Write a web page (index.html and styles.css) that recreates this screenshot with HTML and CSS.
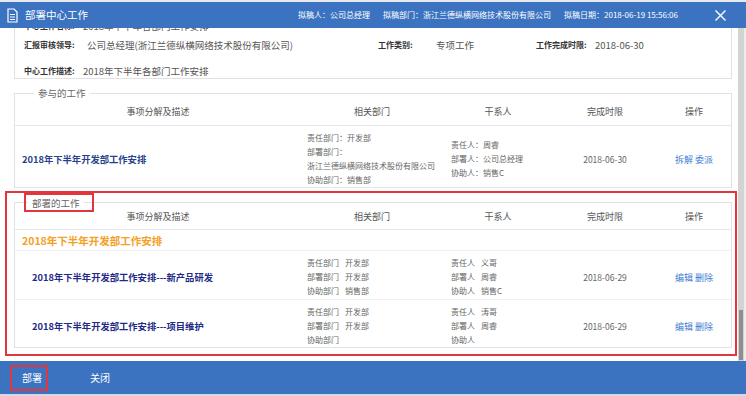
FILE: index.html
```html
<!DOCTYPE html>
<html lang="zh-CN">
<head>
    <meta charset="UTF-8">
    <meta name="viewport" content="width=device-width, initial-scale=1.0">
    <title>部署中心工作</title>
    <link rel="stylesheet" href="styles.css">
</head>
<body>
    <div class="dialog">
        <div class="titlebar">
            <svg class="title-icon" width="11" height="15" viewBox="0 0 11 15">
                <path d="M1 1h6l3 3v10H1z" fill="none" stroke="#fff" stroke-width="1.2"/>
                <path d="M3 6.5h5M3 9h5M3 11.5h5" stroke="#fff" stroke-width="1"/>
            </svg>
            <span class="title">部署中心工作</span>
            <div class="meta">
                <span>拟稿人：公司总经理</span>
                <span>拟稿部门：浙江兰德纵横网络技术股份有限公司</span>
                <span>拟稿日期：2018-06-19 15:56:06</span>
            </div>
            <svg class="close" width="11" height="11" viewBox="0 0 11 11">
                <path d="M0.5 0.5l10 10M10.5 0.5l-10 10" stroke="#fff" stroke-width="1.4"/>
            </svg>
        </div>

        <div class="body">
            <div class="scroll">
                <div class="info-card">
                    <div class="info-row r0">
                        <span class="label w59">中心工作名称:</span>
                        <span class="value">2018年下半年各部门工作安排</span>
                    </div>
                    <div class="info-row r1">
                        <span class="label w63">汇报审核领导:</span>
                        <span class="value w291">公司总经理(浙江兰德纵横网络技术股份有限公司)</span>
                        <span class="label w58">工作类别:</span>
                        <span class="value w100">专项工作</span>
                        <span class="label w59">工作完成时限:</span>
                        <span class="value">2018-06-30</span>
                    </div>
                    <div class="info-row">
                        <span class="label w59">中心工作描述:</span>
                        <span class="value">2018年下半年各部门工作安排</span>
                    </div>
                </div>

                <fieldset class="box joined">
                    <legend>参与的工作</legend>
                    <table class="grid">
                        <colgroup>
                            <col class="c1"><col class="c2"><col class="c3"><col class="c4"><col class="c5">
                        </colgroup>
                        <thead>
                            <tr><th>事项分解及描述</th><th>相关部门</th><th>干系人</th><th>完成时限</th><th>操作</th></tr>
                        </thead>
                        <tbody>
                            <tr>
                                <td class="item">2018年下半年开发部工作安排</td>
                                <td class="dept">
                                    <div>责任部门：开发部</div>
                                    <div>部署部门：</div>
                                    <div>浙江兰德纵横网络技术股份有限公司</div>
                                    <div>协助部门：销售部</div>
                                </td>
                                <td class="people">
                                    <div>责任人：周睿</div>
                                    <div>部署人：公司总经理</div>
                                    <div>协助人：销售C</div>
                                </td>
                                <td class="date">2018-06-30</td>
                                <td class="ops"><a>拆解</a> <a>委派</a></td>
                            </tr>
                        </tbody>
                    </table>
                </fieldset>

                <div class="highlight">
                    <fieldset class="box deploy">
                        <legend class="marked">部署的工作</legend>
                        <table class="grid">
                            <colgroup>
                                <col class="c1"><col class="c2"><col class="c3"><col class="c4"><col class="c5">
                            </colgroup>
                            <thead>
                                <tr><th>事项分解及描述</th><th>相关部门</th><th>干系人</th><th>完成时限</th><th>操作</th></tr>
                            </thead>
                            <tbody>
                                <tr class="group">
                                    <td colspan="5">2018年下半年开发部工作安排</td>
                                </tr>
                                <tr class="sub">
                                    <td class="item">2018年下半年开发部工作安排---新产品研发</td>
                                    <td class="dept">
                                        <div><span>责任部门</span>开发部</div>
                                        <div><span>部署部门</span>开发部</div>
                                        <div><span>协助部门</span>销售部</div>
                                    </td>
                                    <td class="people">
                                        <div><span>责任人</span>义哥</div>
                                        <div><span>部署人</span>周睿</div>
                                        <div><span>协助人</span>销售C</div>
                                    </td>
                                    <td class="date">2018-06-29</td>
                                    <td class="ops"><a>编辑</a> <a>删除</a></td>
                                </tr>
                                <tr class="sub">
                                    <td class="item">2018年下半年开发部工作安排---项目维护</td>
                                    <td class="dept">
                                        <div><span>责任部门</span>开发部</div>
                                        <div><span>部署部门</span>开发部</div>
                                        <div><span>协助部门</span></div>
                                    </td>
                                    <td class="people">
                                        <div><span>责任人</span>涛哥</div>
                                        <div><span>部署人</span>周睿</div>
                                        <div><span>协助人</span></div>
                                    </td>
                                    <td class="date">2018-06-29</td>
                                    <td class="ops"><a>编辑</a> <a>删除</a></td>
                                </tr>
                            </tbody>
                        </table>
                    </fieldset>
                </div>
            </div>
            <div class="scrollbar"><div class="thumb"></div></div>
        </div>

        <div class="footer">
            <button class="btn marked-btn">部署</button>
            <button class="btn close-btn">关闭</button>
        </div>
    </div>
</body>
</html>
```

FILE: styles.css
```css
* {
    margin: 0;
    padding: 0;
    box-sizing: border-box;
}

body {
    font-family: "Noto Sans CJK SC", "Noto Sans", sans-serif;
    background-color: #fff;
    width: 746px;
    height: 396px;
    overflow: hidden;
}

.dialog {
    display: flex;
    flex-direction: column;
    height: 396px;
    border-top: 2px solid #e6e9ee;
    border-bottom: 2px solid #d2d9e3;
}

/* 标题栏 */
.titlebar {
    height: 26px;
    flex-shrink: 0;
    display: flex;
    align-items: center;
    padding-left: 7px;
    background-color: #3b73c1;
    color: #fff;
}

.title-icon {
    display: block;
}

.title {
    margin-left: 7px;
    font-size: 10.5px;
    line-height: 14px;
}

.meta {
    margin-left: auto;
    display: flex;
    gap: 13px;
    font-size: 8px;
    line-height: 12px;
}

.close {
    display: block;
    margin-left: 37px;
    margin-right: 20px;
}

/* 内容区 */
.body {
    flex: 1;
    min-height: 0;
    display: flex;
}

.scroll {
    flex: 1;
    overflow: hidden;
    display: flex;
    flex-direction: column;
    justify-content: flex-end;
    padding: 0 6px 5px 14px;
}

.scroll > * {
    flex-shrink: 0;
}

.scrollbar {
    width: 8px;
    display: flex;
    flex-direction: column;
    justify-content: flex-end;
    padding: 0 1px 1px 1px;
    background-color: #d3d3d3;
    border-right: 2px solid #ebebeb;
}

.thumb {
    height: 50px;
    background-color: #8e8e8e;
}

.info-card {
    border: 1px solid #e2e2e2;
    padding: 6px 9px 1px;
}

.info-row {
    display: flex;
    align-items: center;
    height: 12px;
    line-height: 12px;
    white-space: nowrap;
}

.info-row + .info-row {
    margin-top: 14px;
}

.info-row.r1 {
    margin-top: 7px;
}

.label {
    font-size: 8px;
    font-weight: bold;
    color: #333;
}

.value {
    font-size: 9.5px;
    color: #555;
}

.w58 { width: 58px; }
.w59 { width: 59px; }
.w63 { width: 63px; }
.w100 { width: 100px; }
.w291 { width: 291px; }

/* 分组框 */
.box {
    border: 1px solid #dfe3e6;
    padding: 0;
    min-width: 0;
}

.box legend {
    font-size: 9.5px;
    line-height: 12px;
    color: #666;
    padding: 0 4px;
}

.joined {
    margin-top: 8px;
}

.joined legend {
    margin-left: 19px;
}

.deploy legend {
    margin-left: 13px;
}

.marked {
    position: relative;
}

.marked::after {
    content: "";
    position: absolute;
    top: -3.5px;
    bottom: -3.5px;
    left: -4px;
    right: -10px;
    border: 2px solid #e0363c;
}

.highlight {
    margin: 3px -5px 0 -9px;
    border: 2px solid #e0363c;
    padding: 3.5px 3px 6px 7px;
}

.grid {
    width: 100%;
    border-collapse: collapse;
    table-layout: fixed;
}

.c1 { width: 286px; }
.c2 { width: 142px; }
.c3 { width: 110px; }
.c4 { width: 104px; }
.c5 { width: 74px; }

.grid th {
    font-size: 9px;
    font-weight: normal;
    line-height: 12px;
    color: #555;
    padding: 7px 0;
    border-bottom: 1px solid #e3e8ec;
}

.deploy .grid th {
    padding: 2.5px 0 6px;
}

.grid td {
    vertical-align: middle;
    padding-top: 5px;
}

.item {
    padding-left: 7px;
    font-size: 9.3px;
    font-weight: bold;
    color: #27428c;
    white-space: nowrap;
}

.sub .item {
    padding-left: 17px;
    color: #1f2a88;
}

.dept,
.people {
    font-size: 8px;
    line-height: 14px;
    color: #666;
    white-space: nowrap;
}

.dept {
    padding-left: 6px;
}

.people {
    padding-left: 8px;
}

.dept span,
.people span {
    margin-right: 6px;
}

.date {
    text-align: center;
    font-size: 8.5px;
    color: #666;
}

.ops {
    text-align: center;
    font-size: 9px;
    color: #3c7dd0;
}

.group td {
    padding: 4px 0 2px 7px;
    font-size: 10.5px;
    line-height: 14px;
    font-weight: bold;
    color: #f5a024;
    border-bottom: 1px solid #eef0f2;
}

.grid tr.sub td {
    padding-bottom: 1px;
}

.grid tr.sub:first-of-type td,
.group + .sub td {
    border-bottom: 1px solid #eef0f2;
}

.grid tr.sub:last-child td {
    padding-bottom: 0;
    border-bottom: none;
}

/* 底部按钮 */
.footer {
    height: 33px;
    flex-shrink: 0;
    display: flex;
    align-items: center;
    padding-left: 10px;
    background-color: #3b73c1;
}

.btn {
    height: 26px;
    padding: 0 4px 0 10px;
    border: 2px solid transparent;
    background: none;
    color: #fff;
    font-family: inherit;
    font-size: 10px;
    cursor: pointer;
}

.marked-btn {
    border-color: #e0363c;
}

.close-btn {
    margin-left: 30px;
}
```
